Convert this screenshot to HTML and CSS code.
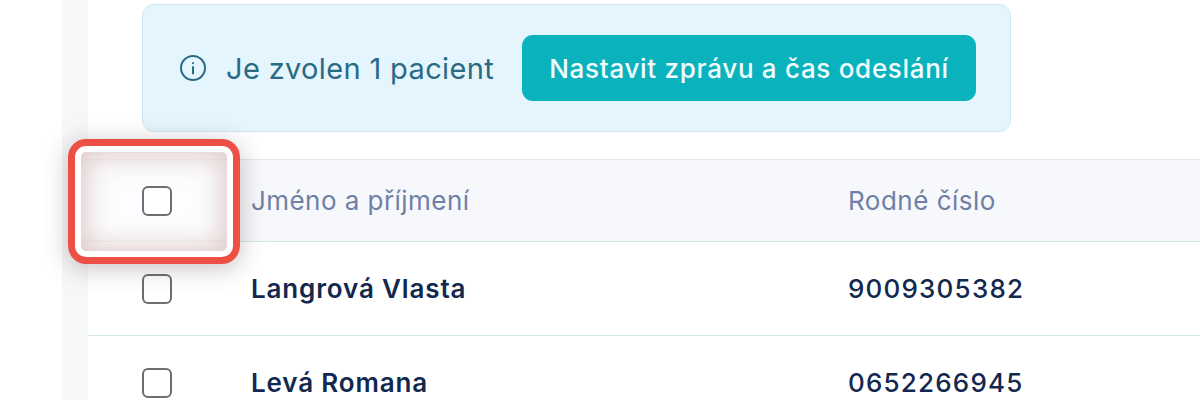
FILE: index.html
```html
<!DOCTYPE html>
<html lang="cs">
<head>
  <meta charset="utf-8">
  <title>Pacienti</title>
  <link rel="stylesheet" href="styles.css">
</head>
<body>
<div class="page">
  <div class="gutter"></div>
  <main class="content">
    <div class="notice">
      <svg class="notice-icon" viewBox="0 0 26 26" fill="none" stroke="currentColor" stroke-width="2" stroke-linecap="round">
        <circle cx="13" cy="13" r="12"/>
        <path d="M13 12v6.500"/>
        <path d="M13 8v.2"/>
      </svg>
      <span class="notice-text">Je zvolen 1 pacient</span>
      <button class="notice-button">Nastavit zprávu a čas odeslání</button>
    </div>

    <div class="row row-head">
      <div class="cell-check"><span class="check"></span></div>
      <div class="cell-name">Jméno a příjmení</div>
      <div class="cell-id">Rodné číslo</div>
    </div>
    <div class="row">
      <div class="cell-check"><span class="check"></span></div>
      <div class="cell-name">Langrová Vlasta</div>
      <div class="cell-id">9009305382</div>
    </div>
    <div class="row">
      <div class="cell-check"><span class="check"></span></div>
      <div class="cell-name">Levá Romana</div>
      <div class="cell-id">0652266945</div>
    </div>
  </main>
</div>
<div class="highlight"></div>
</body>
</html>
```

FILE: styles.css
```css
html, body {
  margin: 0;
  height: 400px;
  overflow: hidden;
  background: #fff;
}

body {
  font-family: "Inter", "Liberation Sans", sans-serif;
  position: relative;
}

.page {
  display: flex;
  height: 400px;
  padding-left: 62px;
}

.gutter {
  width: 26px;
  flex: none;
  background: #f6f7f9;
}

.content {
  flex: 1;
  min-width: 0;
  padding-top: 4px;
}

.notice {
  display: flex;
  align-items: center;
  width: 869px;
  height: 128px;
  box-sizing: border-box;
  margin-left: 54px;
  padding-left: 37px;
  background: #e4f5fd;
  border: 1px solid #cde5f2;
  border-radius: 12px;
}

.notice-icon {
  width: 26px;
  height: 26px;
  color: #2a6a85;
  flex: none;
}

.notice-text {
  margin-left: 20px;
  font-size: 29px;
  letter-spacing: 0.35px;
  color: #2a6a85;
}

.notice-button {
  margin-left: 28px;
  width: 454px;
  height: 66px;
  border: none;
  border-radius: 11px;
  background: #09b2bd;
  color: #f2fdfd;
  font: 500 26px "Inter", "Liberation Sans", sans-serif;
  letter-spacing: 0.7px;
}

.row {
  display: flex;
  align-items: center;
  height: 94px;
  border-bottom: 1px solid #d3e6ea;
  box-sizing: border-box;
  font-size: 26px;
  font-weight: 600;
  letter-spacing: 0.85px;
  color: #12284f;
}

.row-head {
  height: 83px;
  margin-top: 27px;
  background: #f6f8fb;
  border-top: 1px solid #dce8ee;
  font-weight: 400;
  letter-spacing: 0.45px;
  color: #6f7fa6;
}

.cell-check {
  width: 163px;
  flex: none;
  box-sizing: border-box;
  padding-left: 54px;
}

.check {
  display: block;
  width: 30px;
  height: 30px;
  box-sizing: border-box;
  border: 2px solid #6e6e72;
  border-radius: 6px;
  background: #fff;
}

.row-head .check {
  position: relative;
  z-index: 1;
}

.cell-name {
  width: 597px;
  flex: none;
}

.cell-id {
  font-weight: 500;
  letter-spacing: 1.2px;
}

.row-head .cell-id {
  font-weight: 400;
  letter-spacing: 0.5px;
}

.highlight {
  position: absolute;
  left: 68px;
  top: 139px;
  width: 172px;
  height: 125px;
  box-sizing: border-box;
  border: 7px solid #ec5045;
  border-radius: 18px;
  background: rgba(255, 255, 255, 0.65);
  box-shadow: 0 4px 24px rgba(80, 60, 60, 0.32), inset 0 0 0 6px #fff, inset 0 0 26px 12px rgba(175, 120, 120, 0.36);
}
```
